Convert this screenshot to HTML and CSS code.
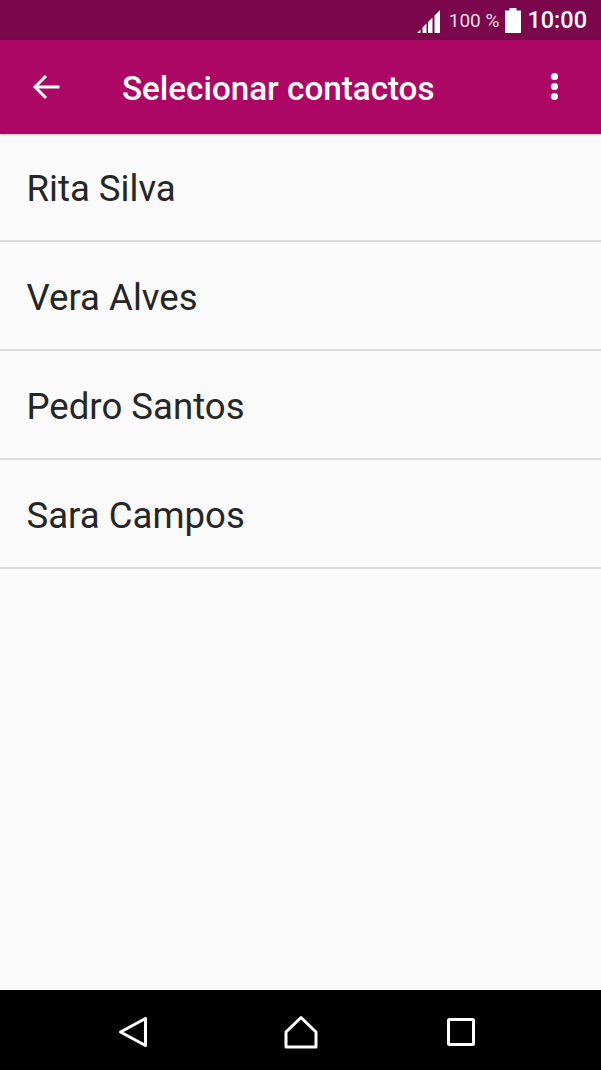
FILE: index.html

```html
<!DOCTYPE html>
<html lang="pt">
<head>
    <meta charset="UTF-8">
    <title>Selecionar contactos</title>
    <link rel="stylesheet" href="styles.css">
</head>
<body>
<div id="phone">
    <div id="statusbar">
        <svg class="signal" width="23" height="23" viewBox="0 0 23 23">
            <path d="M0 23h3.500v-3.500zM5.500 23h4v-9.500l-4 4zM11 23h4.500v-15.500l-4.500 4.500zM17.500 23h5.500v-23l-5.500 5.500z" fill="#fff"/>
        </svg>
        <span class="battery_text">100 %</span>
        <svg class="battery" width="16" height="25" viewBox="0 0 16 25">
            <path d="M4.500 0h7v2.500h4.500v22.500h-16v-22.500h4.500z" fill="#fff"/>
        </svg>
        <span class="clock">10:00</span>
    </div>
    <div id="toolbar">
        <svg class="back" width="28" height="26" viewBox="0 0 28 26">
            <path d="M1.500 13h25M13 2l-11 11l11 11" fill="none" stroke="#fff" stroke-width="3"/>
        </svg>
        <span class="title">Selecionar contactos</span>
        <span class="more"><i></i><i></i><i></i></span>
    </div>
    <div id="main">
        <div class="contact">Rita Silva</div>
        <div class="contact">Vera Alves</div>
        <div class="contact">Pedro Santos</div>
        <div class="contact">Sara Campos</div>
    </div>
    <div id="navbar">
        <svg class="nav_back" width="30" height="32" viewBox="0 0 30 32">
            <path d="M27.500 2.500v27l-25-13.500z" fill="none" stroke="#fff" stroke-width="3" stroke-linejoin="round"/>
        </svg>
        <svg class="nav_home" width="34" height="34" viewBox="0 0 34 34">
            <path d="M17 2.500l15 14.500v15h-30v-15z" fill="none" stroke="#fff" stroke-width="3" stroke-linejoin="round"/>
        </svg>
        <svg class="nav_recent" width="28" height="28" viewBox="0 0 28 28">
            <rect x="1.500" y="1.500" width="25" height="25" rx="1" fill="none" stroke="#fff" stroke-width="3"/>
        </svg>
    </div>
</div>
</body>
</html>
```

FILE: styles.css

```css
html, body {
    margin: 0;
    padding: 0;
}

body {
    background-color: #fafafa;
    font-family: "Roboto", "Liberation Sans", sans-serif;
}

#phone {
    width: 601px;
    height: 1070px;
    display: flex;
    flex-direction: column;
    overflow: hidden;
}

#statusbar {
    height: 40px;
    flex: none;
    background-color: #7b064b;
    color: white;
    display: flex;
    align-items: center;
    justify-content: flex-end;
    padding-right: 14px;
}

.signal {
    margin-right: 9px;
    margin-top: 3px;
}

.battery_text {
    font-size: 19px;
    opacity: .85;
    margin-right: 6px;
}

.battery {
    margin-right: 6px;
}

.clock {
    font-size: 23.500px;
    font-weight: 500;
}

#toolbar {
    height: 94px;
    flex: none;
    background-color: #ad0766;
    color: white;
    display: flex;
    align-items: center;
    box-shadow: 0 1px 2px rgba(0, 0, 0, .25);
}

.back {
    margin-left: 33px;
    margin-top: -1px;
}

.title {
    margin-left: 61px;
    margin-top: 2px;
    font-size: 33.200px;
    font-weight: 500;
    flex: 1;
}

.more {
    display: flex;
    flex-direction: column;
    gap: 3px;
    margin-right: 43px;
    margin-top: -1px;
}

.more i {
    display: block;
    width: 7px;
    height: 7px;
    border-radius: 50%;
    background-color: white;
}

#main {
    flex: 1;
    margin-top: -1px;
}

.contact {
    height: 107px;
    border-bottom: 2px solid #dcdcdc;
    padding-left: 26.500px;
    font-size: 36.600px;
    line-height: 112px;
    color: #262626;
}

#navbar {
    height: 80px;
    flex: none;
    background-color: black;
    display: flex;
    align-items: center;
    padding: 4px 0 0 118px;
    box-sizing: border-box;
}

.nav_home {
    margin-left: 136px;
}

.nav_recent {
    margin-left: 129px;
}
```
